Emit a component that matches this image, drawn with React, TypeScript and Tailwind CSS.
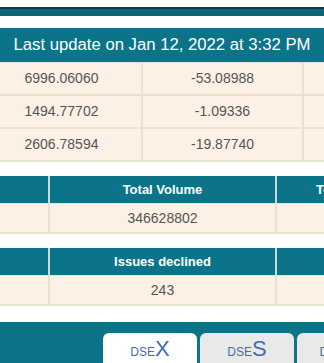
import React from "react";

const CELL = "bg-[#fdf1e6] flex items-center justify-center text-[14px] text-[#555555] shrink-0";
const HEAD = "bg-[#0c7489] flex items-center justify-center text-[13px] font-bold text-white shrink-0 whitespace-nowrap";

const indexRows = [
  ["6996.06060", "-53.08988", ""],
  ["1494.77702", "-1.09336", ""],
  ["2606.78594", "-19.87740", ""],
];

function SummaryTable({ heads, values }: { heads: string[]; values: string[] }) {
  return (
    <div className="overflow-hidden">
      <div className="ml-[-177px] flex flex-col w-max">
        <div className="flex h-[28px] border-b border-[#d9e6e3]">
          {heads.map((h, i) => (
            <div key={i} className={`${HEAD} w-[227px] border-r-2 border-[#c9dcd9]`}>
              {h}
            </div>
          ))}
        </div>
        <div className="flex h-[30px] border-b-2 border-[#ebe1d0]">
          {values.map((v, i) => (
            <div key={i} className={`${CELL} w-[227px] border-r-2 border-[#ebe1d0]`}>
              {v}
            </div>
          ))}
        </div>
      </div>
    </div>
  );
}

function Tab({ label, active }: { label: string; active?: boolean }) {
  return (
    <div
      className={`w-[94px] h-[30px] rounded-t-[6px] flex items-end justify-center pb-[5px] shrink-0 ${
        active ? "bg-white" : "bg-[#e9e9ea]"
      }`}
    >
      <span className="text-[12px] leading-none text-[#3d6fae]">DSE</span>
      <span className="text-[22px] leading-[0.8] text-[#3d6fae]">{label}</span>
    </div>
  );
}

export default function App() {
  return (
    <div
      className="w-[324px] h-[363px] overflow-hidden bg-white"
      style={{ fontFamily: "'Liberation Sans', Arial, sans-serif" }}
    >
      {/* top band */}
      <div className="h-[7px]" />
      <div className="h-[2px] bg-[#0a3c47]" />
      <div className="h-[7px] bg-[#0d6477]" />
      <div className="h-[12px]" />

      {/* last update */}
      <div className="h-[35px] bg-[#0c7489] flex items-center justify-center text-white text-[16.7px] whitespace-nowrap border-b border-[#d9e6e3]">
        Last update on Jan 12, 2022 at 3:32 PM
      </div>

      {/* index values */}
      <div className="overflow-hidden">
        <div className="ml-[-18px] flex flex-col w-max">
          {indexRows.map((row, r) => (
            <div key={r} className="flex h-[33px] border-b-2 border-[#ebe1d0]">
              {row.map((v, i) => (
                <div key={i} className={`${CELL} w-[161px] border-r-2 border-[#ebe1d0]`}>
                  {v}
                </div>
              ))}
            </div>
          ))}
        </div>
      </div>

      <div className="h-[14px]" />
      <SummaryTable
        heads={["Total Trade", "Total Volume", "Total Value in Taka (mn)"]}
        values={["158342", "346628802", "13425.872"]}
      />

      <div className="h-[14px]" />
      <SummaryTable
        heads={["Issues advanced", "Issues declined", "Issues unchanged"]}
        values={["97", "243", "42"]}
      />

      {/* tabs */}
      <div className="mt-[16px] h-[41px] bg-[#0c7489] flex items-end gap-[3px] pl-[103px]">
        <Tab label="X" active />
        <Tab label="S" />
        <Tab label="30" />
      </div>
    </div>
  );
}
